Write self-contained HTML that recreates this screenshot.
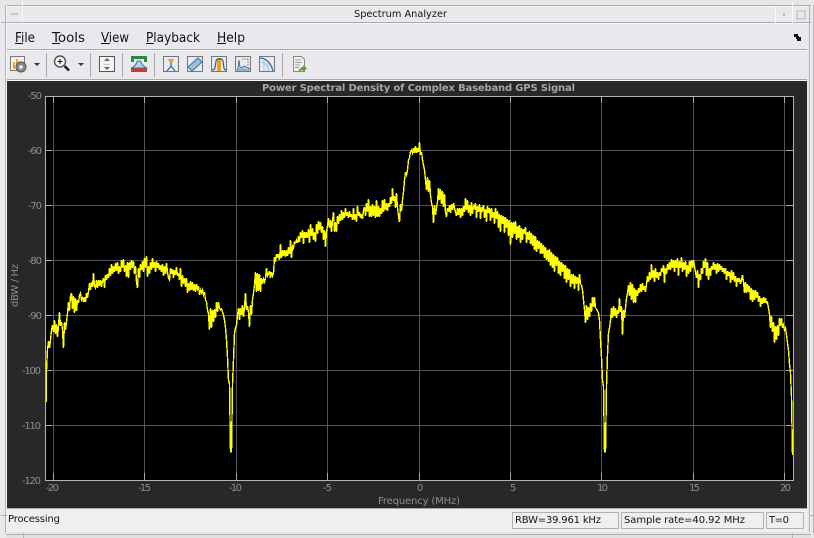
<!DOCTYPE html>
<html><head><meta charset="utf-8"><title>Spectrum Analyzer</title>
<style>
html,body{margin:0;padding:0;background:#e9e8ec;width:814px;height:538px;overflow:hidden}
svg{display:block;position:absolute;left:0;top:0}
text{font-family:"DejaVu Sans","Liberation Sans",sans-serif}
.m{font-size:13px;fill:#111}
.a{font-size:10px;fill:#8e8e8e}
.s{font-size:10px;fill:#111}
</style></head><body>
<svg width="814" height="538" viewBox="0 0 814 538" xmlns="http://www.w3.org/2000/svg">
<g shape-rendering="crispEdges">
<rect width="814" height="538" fill="#e9e8ec"/>
<rect width="814" height="5" fill="#e6e6e6"/>
<rect x="6" y="5" width="805" height="1" fill="#adadad"/>
<rect x="6" y="6" width="805" height="1" fill="#f4f4f4"/>
<rect x="6" y="22" width="805" height="1" fill="#a8a8a8"/>
<rect x="6" y="23" width="804" height="1" fill="#f6f6f6"/>
<rect x="5" y="5" width="1" height="528" fill="#b4b4b4"/>
<rect x="6" y="5" width="1" height="528" fill="#f4f4f4"/>
<rect x="22" y="1" width="1" height="22" fill="#f8f8f8"/>
<rect x="1" y="22" width="22" height="1" fill="#b0b0b0"/>
<rect x="11" y="13" width="7" height="2" fill="#c4c4c4"/>
<rect x="775" y="7" width="1" height="16" fill="#fff"/>
<rect x="792" y="2" width="1" height="21" fill="#fff"/>
<rect x="783" y="13" width="2" height="3" fill="#bbb"/>
<rect x="797" y="11" width="8" height="8" fill="none" stroke="#b5b5b5"/>
<rect x="809" y="5" width="1" height="528" fill="#adadad"/>
<rect x="810" y="23" width="1" height="510" fill="#f6f6f6"/>
<rect x="813" y="5" width="1" height="528" fill="#b4b4b4"/>
<rect x="7" y="49" width="800" height="1" fill="#a8a8a8"/>
<rect x="7" y="50" width="800" height="1" fill="#f6f6f6"/>
<rect x="7" y="79" width="800" height="1" fill="#a8a8a8"/>
<rect x="7" y="80" width="800" height="1" fill="#f6f6f6"/>
<rect x="7" y="81" width="800" height="427" fill="#282828"/>
<rect x="7" y="508" width="800" height="1" fill="#a8a8a8"/>
<rect x="7" y="509" width="800" height="23" fill="#efefef"/>
<rect x="7" y="532" width="804" height="1" fill="#e0e0e0"/>
<rect x="6" y="534" width="805" height="1" fill="#adadad"/>
<rect x="6" y="535" width="805" height="3" fill="#e2e2e4"/>
<rect x="1" y="515" width="6" height="1" fill="#b0b0b0"/>
<rect x="23" y="533" width="1" height="5" fill="#b0b0b0"/>
<rect x="792" y="533" width="1" height="5" fill="#b0b0b0"/>
<rect x="810" y="515" width="4" height="1" fill="#b0b0b0"/>
<!-- status cells -->
<rect x="512.5" y="512.5" width="106" height="16" fill="none" stroke="#b0b0b0"/>
<rect x="621.5" y="512.5" width="142" height="16" fill="none" stroke="#b0b0b0"/>
<rect x="766.5" y="512.5" width="37" height="16" fill="none" stroke="#b0b0b0"/>
<!-- toolbar separators -->
<rect x="46" y="53" width="1" height="24" fill="#a8a8a8"/>
<rect x="90" y="53" width="1" height="24" fill="#a8a8a8"/>
<rect x="122" y="53" width="1" height="24" fill="#a8a8a8"/>
<rect x="154" y="53" width="1" height="24" fill="#a8a8a8"/>
<rect x="282" y="53" width="1" height="24" fill="#a8a8a8"/>
<!-- plot -->
<rect x="45" y="96" width="749" height="385" fill="#000"/>
<g fill="#555">
<rect x="53" y="97" width="1" height="383"/><rect x="144" y="97" width="1" height="383"/><rect x="236" y="97" width="1" height="383"/><rect x="327" y="97" width="1" height="383"/><rect x="419" y="97" width="1" height="383"/><rect x="510" y="97" width="1" height="383"/><rect x="601" y="97" width="1" height="383"/><rect x="693" y="97" width="1" height="383"/><rect x="784" y="97" width="1" height="383"/>
<rect x="46" y="150" width="747" height="1"/><rect x="46" y="205" width="747" height="1"/><rect x="46" y="260" width="747" height="1"/><rect x="46" y="315" width="747" height="1"/><rect x="46" y="370" width="747" height="1"/><rect x="46" y="425" width="747" height="1"/>
</g>
<g fill="#a8a8a8">
<rect x="53" y="97" width="1" height="6"/><rect x="144" y="97" width="1" height="6"/><rect x="236" y="97" width="1" height="6"/><rect x="327" y="97" width="1" height="6"/><rect x="419" y="97" width="1" height="6"/><rect x="510" y="97" width="1" height="6"/><rect x="601" y="97" width="1" height="6"/><rect x="693" y="97" width="1" height="6"/><rect x="784" y="97" width="1" height="6"/>
<rect x="53" y="473" width="1" height="7"/><rect x="144" y="473" width="1" height="7"/><rect x="236" y="473" width="1" height="7"/><rect x="327" y="473" width="1" height="7"/><rect x="419" y="473" width="1" height="7"/><rect x="510" y="473" width="1" height="7"/><rect x="601" y="473" width="1" height="7"/><rect x="693" y="473" width="1" height="7"/><rect x="784" y="473" width="1" height="7"/>
<rect x="46" y="150" width="6" height="1"/><rect x="46" y="205" width="6" height="1"/><rect x="46" y="260" width="6" height="1"/><rect x="46" y="315" width="6" height="1"/><rect x="46" y="370" width="6" height="1"/><rect x="46" y="425" width="6" height="1"/>
<rect x="786" y="150" width="7" height="1"/><rect x="786" y="205" width="7" height="1"/><rect x="786" y="260" width="7" height="1"/><rect x="786" y="315" width="7" height="1"/><rect x="786" y="370" width="7" height="1"/><rect x="786" y="425" width="7" height="1"/>
</g>
<rect x="45.5" y="96.5" width="748" height="384" fill="none" stroke="#b4b4b4"/>
</g>
<polyline fill="none" stroke="#ffff00" stroke-width="1.4" stroke-linejoin="miter" shape-rendering="crispEdges" points="46.5,402 46.5,370 47.5,349 48.5,341 49.5,348 50.5,340 51.5,330 52.5,325 53.5,332 54.5,320 55.5,334 56.5,324 57.5,337 58.5,326 59.5,312 60.5,326 61.5,322 62.5,330 63.5,348 64.5,322 65.5,330 66.5,322 67.5,313 68.5,302 69.5,311 70.5,296 71.5,293 72.5,309 73.5,296 74.5,313 75.5,298 76.5,311 77.5,300 78.5,303 79.5,295 80.5,293 81.5,300 82.5,298 83.5,302 84.5,297 85.5,302 86.5,293 87.5,298 88.5,292 89.5,283 90.5,290 91.5,282 92.5,287 93.5,273 94.5,286 95.5,288 96.5,280 97.5,288 98.5,280 99.5,286 100.5,280 101.5,287 102.5,281 103.5,278 104.5,288 105.5,275 106.5,280 107.5,274 108.5,278 109.5,268 110.5,276 111.5,264 112.5,274 113.5,266 114.5,272 115.5,263 116.5,271 117.5,262 118.5,274 119.5,266 120.5,272 121.5,260 122.5,268 123.5,259 124.5,272 125.5,265 126.5,277 127.5,262 128.5,278 129.5,262 130.5,270 131.5,260 132.5,268 133.5,261 134.5,274 135.5,266 136.5,282 137.5,288 138.5,268 139.5,278 140.5,264 141.5,270 142.5,261 143.5,272 144.5,258 145.5,268 146.5,256 147.5,277 148.5,266 149.5,274 150.5,262 151.5,270 152.5,258 153.5,268 154.5,262 155.5,272 156.5,261 157.5,268 158.5,263 159.5,270 160.5,265 161.5,272 162.5,264 163.5,276 164.5,266 165.5,274 166.5,263 167.5,272 168.5,278 169.5,280 170.5,268 171.5,274 172.5,269 173.5,278 174.5,270 175.5,275 176.5,267 177.5,276 178.5,273 179.5,280 180.5,268 181.5,287 182.5,275 183.5,284 184.5,278 185.5,287 186.5,278 187.5,293 188.5,283 189.5,291 190.5,281 191.5,290 192.5,282 193.5,291 194.5,284 195.5,292 196.5,284 197.5,289 198.5,286 199.5,295 200.5,290 201.5,293 202.5,290 203.5,295 204.5,292 205.5,300 206.5,302 207.5,310 208.5,314 209.5,330 210.5,308 211.5,328 212.5,310 213.5,322 214.5,309 215.5,318 216.5,302 217.5,312 218.5,302 219.5,308 220.5,310 221.5,309 222.5,312 223.5,315 224.5,320 225.5,328 226.5,340 227.5,357 228.5,380 229.5,384 230.5,452 231.5,452 232.5,384 233.5,360 234.5,333 235.5,328 236.5,325 237.5,315 238.5,308 239.5,320 240.5,308 241.5,315 242.5,305 243.5,317 244.5,307 245.5,293 246.5,310 247.5,306 248.5,312 249.5,327 250.5,305 251.5,315 252.5,300 253.5,293 254.5,285 255.5,272 256.5,292 257.5,273 258.5,291 259.5,274 260.5,292 261.5,278 262.5,284 263.5,279 264.5,282 265.5,278 266.5,268 267.5,276 268.5,274 269.5,271 270.5,278 271.5,272 272.5,276 273.5,273 274.5,257 275.5,262 276.5,254 277.5,258 278.5,254 279.5,260 280.5,244 281.5,258 282.5,250 283.5,256 284.5,250 285.5,257 286.5,250 287.5,256 288.5,247 289.5,254 290.5,240 291.5,258 292.5,246 293.5,248 294.5,242 295.5,243 296.5,240 297.5,243 298.5,236 299.5,242 300.5,232 301.5,238 302.5,230 303.5,244 304.5,232 305.5,238 306.5,232 307.5,238 308.5,229 309.5,243 310.5,224 311.5,236 312.5,228 313.5,240 314.5,232 315.5,242 316.5,224 317.5,234 318.5,221 319.5,230 320.5,222 321.5,233 322.5,226 323.5,240 324.5,230 325.5,247 326.5,232 327.5,226 328.5,218 329.5,228 330.5,220 331.5,232 332.5,221 333.5,212 334.5,232 335.5,222 336.5,232 337.5,216 338.5,224 339.5,214 340.5,221 341.5,210 342.5,220 343.5,212 344.5,218 345.5,208 346.5,216 347.5,212 348.5,218 349.5,211 350.5,217 351.5,214 352.5,220 353.5,208 354.5,220 355.5,214 356.5,222 357.5,206 358.5,216 359.5,212 360.5,218 361.5,214 362.5,219 363.5,210 364.5,207 365.5,216 366.5,203 367.5,212 368.5,199 369.5,217 370.5,206 371.5,217 372.5,204 373.5,216 374.5,206 375.5,218 376.5,200 377.5,217 378.5,206 379.5,217 380.5,208 381.5,214 382.5,200 383.5,212 384.5,199 385.5,210 386.5,203 387.5,211 388.5,203 389.5,207 390.5,197 391.5,204 392.5,188 393.5,201 394.5,196 395.5,208 396.5,193 397.5,208 398.5,216 399.5,222 400.5,204 401.5,211 402.5,200 403.5,192 404.5,180 405.5,172 406.5,175 407.5,170 408.5,160 409.5,158 410.5,152 411.5,150 412.5,153 413.5,148 414.5,153 415.5,146 416.5,153 417.5,148 418.5,152 419.5,142 420.5,155 421.5,152 422.5,160 423.5,165 424.5,170 425.5,180 426.5,190 427.5,177 428.5,192 429.5,180 430.5,195 431.5,203 432.5,207 433.5,223 434.5,205 435.5,215 436.5,208 437.5,202 438.5,188 439.5,200 440.5,189 441.5,204 442.5,191 443.5,207 444.5,194 445.5,212 446.5,217 447.5,208 448.5,212 449.5,205 450.5,213 451.5,204 452.5,210 453.5,203 454.5,208 455.5,212 456.5,216 457.5,208 458.5,215 459.5,208 460.5,218 461.5,208 462.5,216 463.5,206 464.5,212 465.5,198 466.5,210 467.5,200 468.5,213 469.5,205 470.5,216 471.5,202 472.5,214 473.5,206 474.5,208 475.5,203 476.5,218 477.5,206 478.5,212 479.5,204 480.5,219 481.5,207 482.5,210 483.5,205 484.5,218 485.5,209 486.5,222 487.5,206 488.5,213 489.5,208 490.5,221 491.5,208 492.5,218 493.5,212 494.5,224 495.5,208 496.5,219 497.5,211 498.5,228 499.5,214 500.5,232 501.5,215 502.5,224 503.5,216 504.5,233 505.5,217 506.5,228 507.5,219 508.5,236 509.5,220 510.5,245 511.5,222 512.5,238 513.5,222 514.5,234 515.5,221 516.5,240 517.5,226 518.5,238 519.5,225 520.5,243 521.5,228 522.5,240 523.5,229 524.5,232 525.5,227 526.5,243 527.5,232 528.5,240 529.5,231 530.5,244 531.5,233 532.5,246 533.5,235 534.5,250 535.5,236 536.5,252 537.5,240 538.5,249 539.5,241 540.5,254 541.5,243 542.5,254 543.5,245 544.5,258 545.5,247 546.5,260 547.5,250 548.5,262 549.5,249 550.5,266 551.5,252 552.5,268 553.5,254 554.5,272 555.5,256 556.5,266 557.5,257 558.5,274 559.5,261 560.5,276 561.5,262 562.5,272 563.5,264 564.5,279 565.5,265 566.5,283 567.5,268 568.5,280 569.5,269 570.5,287 571.5,274 572.5,284 573.5,274 574.5,289 575.5,276 576.5,284 577.5,277 578.5,291 579.5,274 580.5,284 581.5,285 582.5,290 583.5,300 584.5,310 585.5,323 586.5,305 587.5,320 588.5,307 589.5,317 590.5,303 591.5,312 592.5,297 593.5,307 594.5,297 595.5,308 596.5,309 597.5,311 598.5,313 599.5,320 600.5,340 601.5,357 602.5,380 603.5,386 604.5,452 605.5,452 606.5,386 607.5,355 608.5,333 609.5,328 610.5,320 611.5,308 612.5,318 613.5,306 614.5,316 615.5,308 616.5,318 617.5,310 618.5,314 619.5,298 620.5,312 621.5,306 622.5,335 623.5,310 624.5,318 625.5,308 626.5,298 627.5,293 628.5,285 629.5,296 630.5,282 631.5,300 632.5,284 633.5,303 634.5,288 635.5,303 636.5,290 637.5,296 638.5,288 639.5,293 640.5,284 641.5,292 642.5,283 643.5,290 644.5,286 645.5,292 646.5,284 647.5,276 648.5,282 649.5,272 650.5,280 651.5,264 652.5,278 653.5,270 654.5,282 655.5,268 656.5,278 657.5,272 658.5,280 659.5,272 660.5,276 661.5,268 662.5,272 663.5,265 664.5,283 665.5,268 666.5,274 667.5,264 668.5,270 669.5,262 670.5,270 671.5,259 672.5,268 673.5,260 674.5,272 675.5,260 676.5,268 677.5,258 678.5,276 679.5,261 680.5,268 681.5,257 682.5,272 683.5,262 684.5,270 685.5,261 686.5,277 687.5,265 688.5,274 689.5,261 690.5,272 691.5,260 692.5,268 693.5,260 694.5,266 695.5,272 696.5,278 697.5,270 698.5,288 699.5,274 700.5,280 701.5,268 702.5,274 703.5,261 704.5,268 705.5,258 706.5,276 707.5,262 708.5,280 709.5,268 710.5,276 711.5,266 712.5,270 713.5,262 714.5,270 715.5,264 716.5,274 717.5,263 718.5,272 719.5,264 720.5,270 721.5,266 722.5,272 723.5,268 724.5,274 725.5,268 726.5,280 727.5,271 728.5,276 729.5,272 730.5,283 731.5,270 732.5,280 733.5,272 734.5,282 735.5,276 736.5,287 737.5,278 738.5,282 739.5,278 740.5,284 741.5,280 742.5,275 743.5,282 744.5,293 745.5,282 746.5,293 747.5,284 748.5,292 749.5,286 750.5,300 751.5,288 752.5,302 753.5,290 754.5,300 755.5,290 756.5,298 757.5,292 758.5,302 759.5,296 760.5,307 761.5,298 762.5,304 763.5,297 764.5,303 765.5,298 766.5,303 767.5,302 768.5,308 769.5,314 770.5,328 771.5,316 772.5,332 773.5,322 774.5,343 775.5,326 776.5,340 777.5,325 778.5,336 779.5,318 780.5,326 781.5,318 782.5,328 783.5,325 784.5,330 785.5,328 786.5,335 787.5,343 788.5,350 789.5,364 790.5,373 791.5,397 792.5,455"/>
<!-- text -->
<text x="354" y="17" font-size="10" fill="#111" textLength="93" lengthAdjust="spacingAndGlyphs">Spectrum Analyzer</text>
<text class="m" x="15" y="42" textLength="20" lengthAdjust="spacingAndGlyphs">File</text>
<text class="m" x="52" y="42" textLength="33" lengthAdjust="spacingAndGlyphs">Tools</text>
<text class="m" x="101" y="42" textLength="28" lengthAdjust="spacingAndGlyphs">View</text>
<text class="m" x="146" y="42" textLength="54" lengthAdjust="spacingAndGlyphs">Playback</text>
<text class="m" x="217" y="42" textLength="28" lengthAdjust="spacingAndGlyphs">Help</text>
<g fill="#111" shape-rendering="crispEdges"><rect x="15" y="43" width="8" height="1"/><rect x="52" y="43" width="8" height="1"/><rect x="101" y="43" width="9" height="1"/><rect x="146" y="43" width="8" height="1"/><rect x="217" y="43" width="9" height="1"/></g>
<text x="262" y="91" font-size="10" font-weight="bold" fill="#a6a6a6" textLength="313" lengthAdjust="spacing">Power Spectral Density of Complex Baseband GPS Signal</text>
<g class="ya">
<text class="a" x="28" y="99" textLength="14">-50</text>
<text class="a" x="28" y="154" textLength="14">-60</text>
<text class="a" x="28" y="209" textLength="14">-70</text>
<text class="a" x="28" y="264" textLength="14">-80</text>
<text class="a" x="28" y="319" textLength="14">-90</text>
<text class="a" x="22" y="374" textLength="19">-100</text>
<text class="a" x="22" y="429" textLength="19">-110</text>
<text class="a" x="22" y="484" textLength="19">-120</text>
</g>
<text class="a" x="46" y="491" textLength="13">-20</text>
<text class="a" x="138" y="491" textLength="13">-15</text>
<text class="a" x="229" y="491" textLength="13">-10</text>
<text class="a" x="323" y="491" textLength="9">-5</text>
<text class="a" x="417" y="491" textLength="6">0</text>
<text class="a" x="510" y="491" textLength="6">5</text>
<text class="a" x="597" y="491" textLength="11">10</text>
<text class="a" x="689" y="491" textLength="11">15</text>
<text class="a" x="780" y="491" textLength="11">20</text>
<text class="a" x="378" y="504" textLength="82" lengthAdjust="spacing">Frequency (MHz)</text>
<text class="a" transform="translate(18,307) rotate(-90)" textLength="43" lengthAdjust="spacing">dBW / Hz</text>
<text class="s" x="8" y="522" textLength="52">Processing</text>
<text class="s" x="515" y="523" textLength="86">RBW=39.961 kHz</text>
<text class="s" x="624" y="523" textLength="121">Sample rate=40.92 MHz</text>
<text class="s" x="769" y="523" textLength="20">T=0</text>
<!-- menu corner arrow -->
<path d="M794 34h4v2h1v1h2v4h-4v-2h-1v-2h-2z" fill="#111" shape-rendering="crispEdges"/>
<!-- icon 1 -->
<g shape-rendering="crispEdges"><rect x="10.5" y="56.5" width="14" height="14" fill="#f5f1e6" stroke="#777"/>
<rect x="13" y="62" width="2" height="7" fill="#e8a13a"/><rect x="16" y="59" width="2" height="10" fill="#e8a13a"/><rect x="19" y="61" width="2" height="8" fill="#e9c060"/></g>
<circle cx="21" cy="67" r="5" fill="#8a8a8a" stroke="#555"/><circle cx="21" cy="67" r="1.8" fill="#eee"/>
<path d="M34 63h6l-3 3z" fill="#333"/>
<!-- zoom icon -->
<circle cx="60" cy="61.5" r="5.5" fill="#f4f4f4" stroke="#555" stroke-width="1.4"/>
<path d="M57.500 61.500h5M60 59v5" stroke="#111" stroke-width="1"/>
<path d="M64.500 66l4.500 4.500" stroke="#222" stroke-width="2.6"/>
<path d="M78 63h6l-3 3z" fill="#333"/>
<!-- autoscale icon -->
<rect x="99.5" y="56.5" width="15" height="15" fill="#f4f4f4" stroke="#555"/>
<path d="M107 58l3 3h-6zM107 70l3-3h-6z" fill="#666"/>
<rect x="104" y="64" width="6" height="1" fill="#ccc"/>
<!-- green/red icon -->
<g shape-rendering="crispEdges"><rect x="131" y="56" width="16" height="16" fill="#e8eef2"/><rect x="131" y="56" width="16" height="3" fill="#2b8a3e"/><rect x="131" y="68" width="16" height="4" fill="#d9362b"/><rect x="131" y="59" width="3" height="3" fill="#2b8a3e"/><rect x="144" y="59" width="3" height="3" fill="#2b8a3e"/></g>
<path d="M131.500 68l4-3 2-4h3l2 4 4 3z" fill="#bcd3e4" stroke="#3b6d99"/>
<!-- five boxed icons -->
<g fill="#e6ebef" stroke="#777"><rect x="163.5" y="56.5" width="15" height="15"/><rect x="235.5" y="56.5" width="15" height="15"/><rect x="259.5" y="56.5" width="15" height="15"/><rect x="211.5" y="56.5" width="15" height="15"/><rect x="187.5" y="56.5" width="15" height="15"/></g>
<path d="M168 59h6l-2 4h-2z" fill="#d9a33a"/>
<path d="M171 63v3l-4 5M171 66l4 5" fill="none" stroke="#3b6d99" stroke-width="1.3"/>
<path d="M188 67l4 4 10-9-4-4z" fill="#9cc0dc" stroke="#3f6f95"/>
<rect x="217" y="58" width="4" height="13" fill="#f0a010"/>
<path d="M212 70c3 0 3-1 4-9 1-3 6-3 7 0 1 8 1 9 3 9" fill="none" stroke="#2d5f8a" stroke-width="1.2"/>
<path d="M237 70h12v-2l-3-1-2-1-2 2-2-1-1-7-1 8z" fill="#bcd3e4" stroke="#2d5f8a" stroke-width=".8"/>
<path d="M242 59h6M248 59v7" fill="none" stroke="#d9562b" stroke-dasharray="1.500 1"/>
<path d="M260 58c6 0 11 5 13 13" fill="none" stroke="#2d6fa8" stroke-width="1.3"/>
<path d="M260 62c5 0 8 4 9 9M264 60v11M268 62v9" fill="none" stroke="#a9c4d8"/>
<!-- document icon -->
<path d="M293.500 56.500h8l3 3v12h-11z" fill="#f2f2f2" stroke="#8a8a8a"/>
<path d="M295 60h6M295 62.500h7M295 65h5M295 67.500h4" stroke="#999"/>
<path d="M298 73c0-3 3-6 5-6v-2l4 3.500-4 3.500v-2c-1 0-3 1-5 3z" fill="#5f9e3a"/>
</svg>
</body></html>
